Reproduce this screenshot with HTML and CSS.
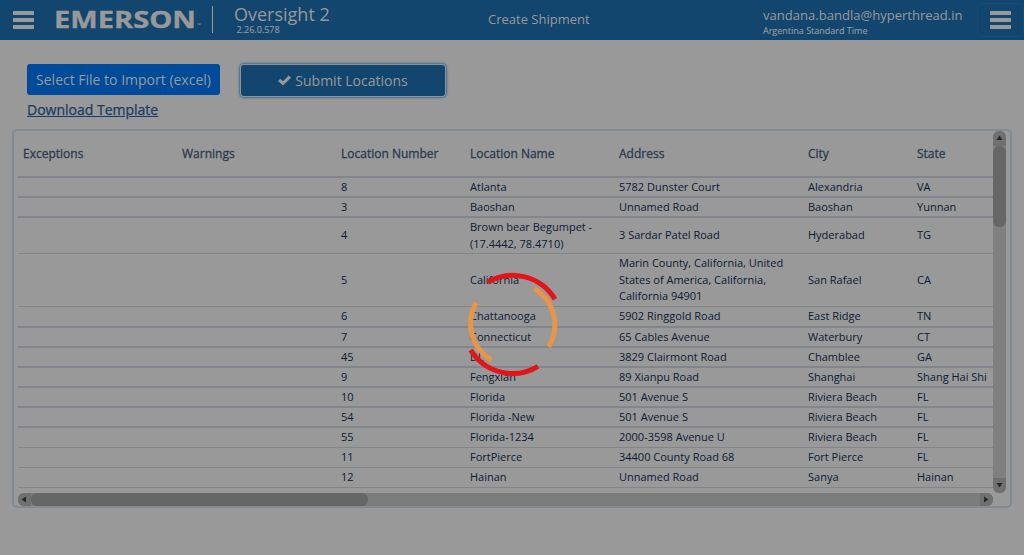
FILE: index.html
```html
<!DOCTYPE html>
<html lang="en">
<head>
<meta charset="utf-8">
<title>Create Shipment</title>
<link rel="stylesheet" href="styles.css">
</head>
<body>
<header class="topbar">
  <svg class="bars" viewBox="0 0 21 18"><path d="M0 0h21v4H0zM0 7h21v4H0zM0 14h21v4H0z"/></svg>
  <svg class="brand" viewBox="0 0 152 30"><text class="brand-name" x="0" y="23.500" textLength="142" lengthAdjust="spacingAndGlyphs">EMERSON</text><text class="brand-tm" x="143" y="23">™</text></svg>
  <span class="divider"></span>
  <div class="product"><div class="product-name">Oversight 2</div><div class="version">2.26.0.578</div></div>
  <div class="page-title">Create Shipment</div>
  <div class="user"><div class="email">vandana.bandla@hyperthread.in</div><div class="zone">Argentina Standard Time</div></div>
  <div class="menu"><svg class="bars" viewBox="0 0 21 18"><path d="M0 0h21v4H0zM0 7h21v4H0zM0 14h21v4H0z"/></svg></div>
</header>
<main>
  <div class="actions">
    <div class="import"><button class="btn select">Select File to Import (excel)</button><a class="template">Download Template</a></div>
    <button class="btn submit"><svg class="check" viewBox="0 0 13 11"><path d="M0 6l2.3-2.3L5 6.2 10.7.5 13 2.8 5 10.6z"/></svg>Submit Locations</button>
  </div>
  <section class="panel">
    <div class="table">
      <div class="row head"><span>Exceptions</span><span>Warnings</span><span>Location Number</span><span>Location Name</span><span>Address</span><span>City</span><span>State</span></div>
      <div class="row thick"><span></span><span></span><span>8</span><span>Atlanta</span><span>5782 Dunster Court</span><span>Alexandria</span><span>VA</span></div>
      <div class="row thick"><span></span><span></span><span>3</span><span>Baoshan</span><span>Unnamed Road</span><span>Baoshan</span><span>Yunnan</span></div>
      <div class="row two"><span></span><span></span><span>4</span><span>Brown bear Begumpet -<br>(17.4442, 78.4710)</span><span>3 Sardar Patel Road</span><span>Hyderabad</span><span>TG</span></div>
      <div class="row three"><span></span><span></span><span>5</span><span>California</span><span>Marin County, California, United<br>States of America, California,<br>California 94901</span><span>San Rafael</span><span>CA</span></div>
      <div class="row thick tall"><span></span><span></span><span>6</span><span>Chattanooga</span><span>5902 Ringgold Road</span><span>East Ridge</span><span>TN</span></div>
      <div class="row thick"><span></span><span></span><span>7</span><span>Connecticut</span><span>65 Cables Avenue</span><span>Waterbury</span><span>CT</span></div>
      <div class="row thick"><span></span><span></span><span>45</span><span>DL</span><span>3829 Clairmont Road</span><span>Chamblee</span><span>GA</span></div>
      <div class="row thick"><span></span><span></span><span>9</span><span>Fengxian</span><span>89 Xianpu Road</span><span>Shanghai</span><span>Shang Hai Shi</span></div>
      <div class="row thick"><span></span><span></span><span>10</span><span>Florida</span><span>501 Avenue S</span><span>Riviera Beach</span><span>FL</span></div>
      <div class="row thick"><span></span><span></span><span>54</span><span>Florida -New</span><span>501 Avenue S</span><span>Riviera Beach</span><span>FL</span></div>
      <div class="row"><span></span><span></span><span>55</span><span>Florida-1234</span><span>2000-3598 Avenue U</span><span>Riviera Beach</span><span>FL</span></div>
      <div class="row"><span></span><span></span><span>11</span><span>FortPierce</span><span>34400 County Road 68</span><span>Fort Pierce</span><span>FL</span></div>
      <div class="row"><span></span><span></span><span>12</span><span>Hainan</span><span>Unnamed Road</span><span>Sanya</span><span>Hainan</span></div>
    </div>
    <div class="vbar"><svg class="cap" viewBox="0 0 13 15"><path d="M3.5 9h6L6.5 4.5z"/></svg><i class="vthumb"></i><svg class="cap end" viewBox="0 0 13 15"><path d="M3.5 5h6L6.5 9.5z"/></svg></div>
    <div class="hbar"><svg class="cap" viewBox="0 0 13 13"><path d="M8 3.5v6L3.5 6.5z"/></svg><i class="hthumb"></i><svg class="cap end" viewBox="0 0 13 13"><path d="M4 3.5v6l4.5-3z"/></svg></div>
  </section>
</main>
<svg class="spinner" viewBox="0 0 100 110">
  <path class="red" d="M19.700 13.300A49 49 0 0 1 87 30.300"/>
  <path class="red" d="M2.700 81A49 49 0 0 0 70 97.300"/>
  <path class="orange" d="M66.300 19.700A42 42 0 0 1 80.700 77.700"/>
  <path class="orange" d="M8.300 33.700A42 42 0 0 0 23.300 91"/>
</svg>
</body>
</html>
```
FILE: styles.css
```css
* { box-sizing: border-box; }
body { margin: 0; height: 555px; overflow: hidden; background: #999; font-family: "Open Sans", sans-serif; color: #0b1a35; }
.topbar { height: 40px; background: #12466f; color: #999; display: flex; align-items: flex-start; padding-left: 13px; }
.bars { width: 21px; height: 18px; margin-top: 11px; fill: #999; flex: none; }
.brand { width: 152px; height: 30px; margin: 4px 0 0 20px; fill: #999; flex: none; overflow: visible; }
.brand-name { font-size: 23.5px; font-weight: 700; stroke: #999; stroke-width: .4px; }
.brand-tm { font-size: 5px; }
.divider { width: 1px; height: 27px; margin: 6px 0 0 6px; background: #999; }
.product { margin-left: 21px; width: 254px; white-space: nowrap; }
.product-name { font-size: 18px; line-height: 22px; margin-top: 3px; }
.version { font-size: 9px; line-height: 10px; margin: 0 0 0 2.5px; -webkit-text-stroke: .15px #999; }
.page-title { font-size: 13px; line-height: 20px; margin-top: 9px; width: 275px; }
.user { width: 214px; white-space: nowrap; }
.email { font-size: 13.05px; line-height: 20px; margin-top: 5px; }
.zone { font-size: 9px; line-height: 12px; -webkit-text-stroke: .15px #999; }
.menu { width: 47px; height: 34px; margin-top: 3px; border: 1px solid #194a72; border-radius: 4px; padding-left: 12px; }
.menu .bars { display: block; margin-top: 7px; }
.actions { display: flex; height: 89px; padding: 24px 0 0 27px; }
.import { display: flex; flex-direction: column; width: 214px; }
.btn { font: 14px "Open Sans", sans-serif; color: #999; border: 0; border-radius: 3px; display: flex; align-items: center; justify-content: center; white-space: nowrap; padding: 0; }
.select { width: 193px; height: 31px; background: #004b99; }
.template { font-size: 14px; line-height: 20px; margin-top: 5px; color: #153d66; text-decoration: underline; -webkit-text-stroke: .25px #153d66; }
.submit { width: 204px; height: 31px; margin-top: 1px; background: #12466f; box-shadow: 0 0 0 1px #8c949b, 0 0 2px 2px #426b8e; }
.check { width: 13px; height: 11px; margin-right: 4px; fill: #999; }
.panel { width: 1000px; height: 379px; margin-left: 12px; border: 2px solid #838a91; border-radius: 5px; display: grid; grid-template: 358px 13px / 975px 13px; padding: 0 0 0 4px; }
.table { overflow: hidden; }
.row { display: grid; grid-template-columns: 159px 159px 129px 149px 189px 109px 81px; height: 20px; align-items: center; border-bottom: 1px solid #838588; font-size: 11px; line-height: 16.500px; padding-left: 5px; white-space: nowrap; }
.row.thick { border-bottom: 2px solid #82868c; }
.row.head { height: 47px; padding-top: 2px; border-bottom: 2px solid #82868c; font-size: 12px; font-weight: 400; color: #2b3950; -webkit-text-stroke: .3px #2b3950; }
.row.two { height: 36px; }
.row.three { height: 53px; }
.row.tall { height: 21px; }
.vbar { height: 362px; background: #808080; border-radius: 6px; display: flex; flex-direction: column; overflow: hidden; }
.hbar { margin-top: 4px; width: 975px; height: 13px; background: #7b7b7b; border-radius: 6px; display: flex; overflow: hidden; }
.cap { background: #707070; fill: #292929; flex: none; width: 13px; }
.vbar .cap { height: 15px; }
.end { margin-top: auto; }
.hbar .end { margin: 0 0 0 auto; }
.vthumb { height: 81px; background: #666; border-radius: 6px; }
.hthumb { width: 337px; background: #666; border-radius: 6px; }
.spinner { position: absolute; left: 468px; top: 269px; width: 100px; height: 110px; fill: none; stroke-width: 5; }
.red { stroke: #e31519; }
.orange { stroke: #e89547; }
```
